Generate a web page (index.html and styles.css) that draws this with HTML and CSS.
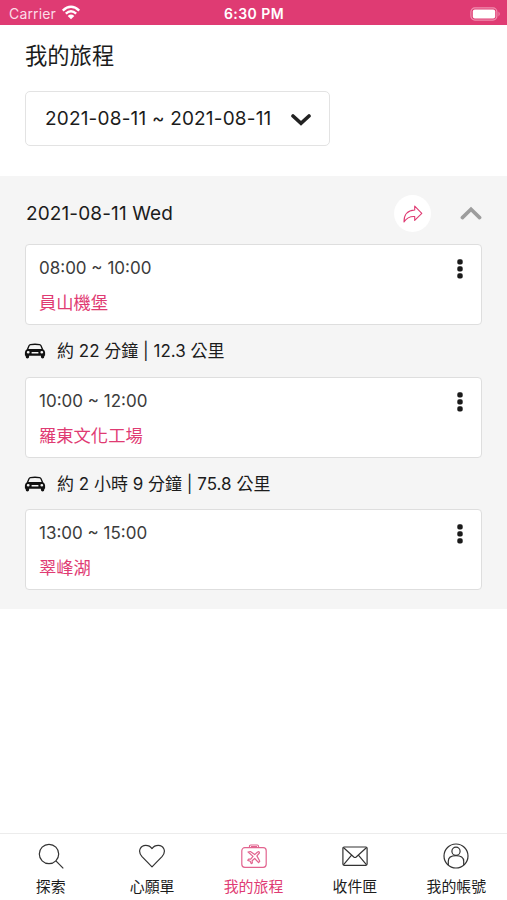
FILE: index.html
```
<!DOCTYPE html>
<html lang="zh-Hant">
<head>
    <meta charset="UTF-8">
    <meta name="viewport" content="width=device-width, initial-scale=1.0">
    <title>我的旅程</title>
    <link rel="stylesheet" href="styles.css">
</head>
<body>
    <svg class="sprite" aria-hidden="true">
        <symbol id="car" viewBox="0 0 22 18">
            <path fill-rule="evenodd" d="M6.4 2Q11 1.2 15.6 2Q17 2.3 17.6 3.6L19.2 7.2Q21.1 8.4 21.1 10.4V13.2Q21.1 13.7 20.3 13.7V14.8Q20.3 16.4 18.6 16.4T16.9 14.8V13.7H5.1V14.8Q5.1 16.4 3.4 16.4T1.7 14.8V13.7Q.9 13.7 .9 13.2V10.4Q.9 8.4 2.8 7.2L4.4 3.6Q5 2.3 6.4 2ZM6.7 3.3Q5.8 3.5 5.5 4.2L4.4 6.9H17.6L16.5 4.2Q16.2 3.5 15.3 3.3Q11 2.6 6.7 3.3ZM7.6 10V11.6H14.4V10ZM4.2 9A1.4 1.3 0 1 0 4.2 11.6A1.4 1.3 0 1 0 4.2 9ZM17.8 9A1.4 1.3 0 1 0 17.8 11.6A1.4 1.3 0 1 0 17.8 9Z"/>
        </symbol>
        <symbol id="dots" viewBox="0 0 6 20">
            <rect x=".3" y=".2" width="5.4" height="5.4" rx="1.8"/>
            <rect x=".3" y="7.2" width="5.4" height="5.4" rx="1.8"/>
            <rect x=".3" y="14.2" width="5.4" height="5.4" rx="1.8"/>
        </symbol>
    </svg>

    <header class="status-bar">
        <div class="carrier">
            <span>Carrier</span>
            <svg class="wifi" viewBox="0 0 20 15">
                <path d="M1.8 5.6Q10-2 18.2 5.6M4.8 8.7Q10 4 15.2 8.7"/>
                <path class="wifi-dot" d="M6.7 10.9Q10 8.2 13.3 10.9L10 14.3Z"/>
            </svg>
        </div>
        <span class="clock">6:30 PM</span>
        <svg class="battery" viewBox="0 0 31 14">
            <rect class="battery-case" x=".9" y=".9" width="26" height="12.2" rx="4"/>
            <rect x="2.8" y="2.6" width="22.4" height="8.8" rx="2"/>
            <path class="battery-tip" d="M28.5 4.6Q31 7 28.5 9.4Z"/>
        </svg>
    </header>

    <main>
        <section class="top">
            <h1>我的旅程</h1>
            <button class="date-select" type="button">
                <span>2021-08-11 ~ 2021-08-11</span>
                <svg class="chevron-down" viewBox="0 0 20 14"><path d="M2 3L10 10.4L18 3"/></svg>
            </button>
        </section>

        <section class="day">
            <div class="day-header">
                <h2>2021-08-11 Wed</h2>
                <div class="share">
                    <svg viewBox="0 0 20 18"><path d="M11.7 1.1L18.8 8.3L11.7 15.4V11.6C7.3 11.3 3.8 12.7 1 17C.9 9.7 4.4 5.4 11.7 5Z"/></svg>
                </div>
                <svg class="chevron-up" viewBox="0 0 22 14"><path d="M2.4 11.6L11 3.2L19.6 11.6"/></svg>
            </div>

            <article class="card">
                <div class="time">08:00 ~ 10:00</div>
                <div class="place">員山機堡</div>
                <svg class="more"><use href="#dots"/></svg>
            </article>
            <div class="route">
                <svg class="car"><use href="#car"/></svg>
                <span>約 22 分鐘 | 12.3 公里</span>
            </div>
            <article class="card">
                <div class="time">10:00 ~ 12:00</div>
                <div class="place">羅東文化工場</div>
                <svg class="more"><use href="#dots"/></svg>
            </article>
            <div class="route">
                <svg class="car"><use href="#car"/></svg>
                <span>約 2 小時 9 分鐘 | 75.8 公里</span>
            </div>
            <article class="card">
                <div class="time">13:00 ~ 15:00</div>
                <div class="place">翠峰湖</div>
                <svg class="more"><use href="#dots"/></svg>
            </article>
        </section>
    </main>

    <nav class="tab-bar">
        <a class="tab">
            <svg viewBox="0 0 28 28"><circle cx="12" cy="12" r="9.7"/><path d="M18.9 18.9L26.3 26.3"/></svg>
            <span>探索</span>
        </a>
        <a class="tab">
            <svg viewBox="0 0 28 28"><path d="M14 24.9L4 14.6C-1.2 8.5 3.2 3.4 7.7 3.4C10.6 3.4 12.6 4.6 14 6.6C15.4 4.6 17.4 3.4 20.3 3.4C24.8 3.4 29.2 8.5 24 14.6Z"/></svg>
            <span>心願單</span>
        </a>
        <a class="tab active">
            <svg viewBox="0 0 28 28">
                <rect x="1.8" y="5.7" width="24.4" height="19.6" rx="3"/>
                <path d="M9.5 5.5V4.2Q9.5 3 10.7 3H17.3Q18.5 3 18.5 4.2V5.5M11 4.6H17"/>
                <path d="M8.1 10L10.4 9.5L14.7 12.6L17.3 10.2Q19.6 8.9 19.4 11L16.9 13.9L19.8 19.2L18.6 20.7L14.7 16.5L12.1 18.8L12.4 21L11.2 21.6L10.2 19.2L7.8 18.4L8.6 17.2L10.7 17.1L13 14.4Z"/>
            </svg>
            <span>我的旅程</span>
        </a>
        <a class="tab">
            <svg viewBox="0 0 28 28"><rect x="1.9" y="5" width="24.2" height="18.3" rx="1.2"/><path d="M2.4 5.5L12.8 15Q14 16 15.2 15L25.6 5.5M2.4 22.8L10.6 13.1M25.6 22.8L17.4 13.1"/></svg>
            <span>收件匣</span>
        </a>
        <a class="tab">
            <svg viewBox="0 0 28 28"><circle cx="14" cy="14" r="12"/><circle cx="14" cy="9.3" r="4.1"/><path d="M6.3 23V19.3C6.3 15.6 9.2 13.6 14 13.6S21.7 15.6 21.7 19.3V23"/></svg>
            <span>我的帳號</span>
        </a>
    </nav>
</body>
</html>
```

FILE: styles.css
```
* {
    box-sizing: border-box;
}
body {
    font-family: Inter, "Noto Sans CJK TC", sans-serif;
    display: flex;
    flex-direction: column;
    height: 900px;
    margin: 0;
    background: #fff;
    color: #1c1c1c;
}
svg {
    display: block;
    flex: none;
}
.sprite {
    position: absolute;
    width: 0;
    height: 0;
}
.status-bar {
    display: grid;
    grid-template-columns: 1fr auto 1fr;
    align-items: center;
    height: 25px;
    padding: 2px 6px 0 9px;
    background: #df3b73;
    color: #fff;
    fill: #fff;
    font-size: 14px;
    line-height: 20px;
}
.carrier {
    display: flex;
    align-items: center;
    gap: 5px;
    color: #fbdde7;
    letter-spacing: 0.15px;
}
.wifi {
    width: 20px;
    height: 15px;
    margin-top: -3px;
    fill: none;
    stroke: #fff;
    stroke-width: 2.4;
}
.wifi-dot {
    fill: #fff;
    stroke: none;
}
.clock {
    margin-right: 2px;
    font-weight: 600;
    letter-spacing: 0.45px;
}
.battery {
    width: 31px;
    height: 14px;
    justify-self: end;
}
.battery-case {
    fill: none;
    stroke: #f08fb0;
    stroke-width: 1.2;
}
.battery-tip {
    fill: #f08fb0;
}
main {
    flex: 1;
}
.top {
    height: 151px;
    padding: 15px 25px 0;
}
h1 {
    margin: 0 0 19px;
    font-size: 22.3px;
    font-weight: 400;
    line-height: 32px;
}
.date-select {
    display: flex;
    align-items: center;
    justify-content: space-between;
    width: 305px;
    height: 55px;
    padding: 0 18px 0 19px;
    background: #fff;
    color: #1c1c1c;
    border: 1px solid #e3e3e3;
    border-radius: 5px;
    font-family: inherit;
    font-size: 19px;
    letter-spacing: 0.18px;
    white-space: nowrap;
}
.chevron-down {
    width: 20px;
    height: 14px;
    margin-top: 2px;
    fill: none;
    stroke: #222;
    stroke-width: 3.6;
    stroke-linecap: round;
}
.day {
    height: 433px;
    padding: 18px 25px 0;
    background: #f5f5f5;
}
.day-header {
    display: flex;
    align-items: center;
    height: 38px;
    margin-bottom: 12px;
}
h2 {
    flex: 1;
    margin: 0;
    padding: 1px 0 0 1px;
    font-size: 19px;
    font-weight: 400;
    letter-spacing: 0.12px;
    line-height: 38px;
}
.share {
    display: flex;
    align-items: center;
    justify-content: center;
    width: 37px;
    height: 37px;
    margin-right: 29px;
    background: #fff;
    border-radius: 50%;
}
.share svg {
    width: 20px;
    height: 18px;
    margin-top: 2px;
    fill: none;
    stroke: #df3b73;
    stroke-width: 1.1;
    stroke-linejoin: round;
}
.chevron-up {
    width: 22px;
    height: 14px;
    fill: none;
    stroke: #9d9d9d;
    stroke-width: 3.6;
    stroke-linecap: round;
}
.card {
    position: relative;
    height: 81px;
    padding: 11px 13px;
    background: #fff;
    border: 1px solid #dedede;
    border-radius: 4px;
}
.time {
    margin-bottom: 11px;
    color: #3c3c3c;
    font-size: 17px;
    line-height: 24px;
}
.place {
    color: #df3b73;
    font-size: 17.3px;
    line-height: 24px;
}
.more {
    position: absolute;
    top: 14px;
    right: 18px;
    width: 6px;
    height: 20px;
    fill: #1a1a1a;
}
.route {
    display: flex;
    align-items: center;
    gap: 11px;
    height: 51.7px;
    font-size: 17px;
}
.route span {
    padding-bottom: 2px;
}
.car {
    width: 22px;
    height: 18px;
    margin-left: -1px;
    fill: #111;
}
.tab-bar {
    display: flex;
    height: 67px;
    border-top: 1px solid #ececec;
}
.tab {
    flex: 1;
    display: flex;
    flex-direction: column;
    align-items: center;
    padding-top: 8px;
    font-size: 14.9px;
    line-height: 22px;
    white-space: nowrap;
}
.tab svg {
    width: 28px;
    height: 28px;
    margin-bottom: 6px;
    fill: none;
    stroke: #333;
    stroke-width: 1.2;
    stroke-linejoin: round;
}
.tab.active {
    color: #df3b73;
}
.tab.active svg {
    stroke: #e2648f;
}
```
